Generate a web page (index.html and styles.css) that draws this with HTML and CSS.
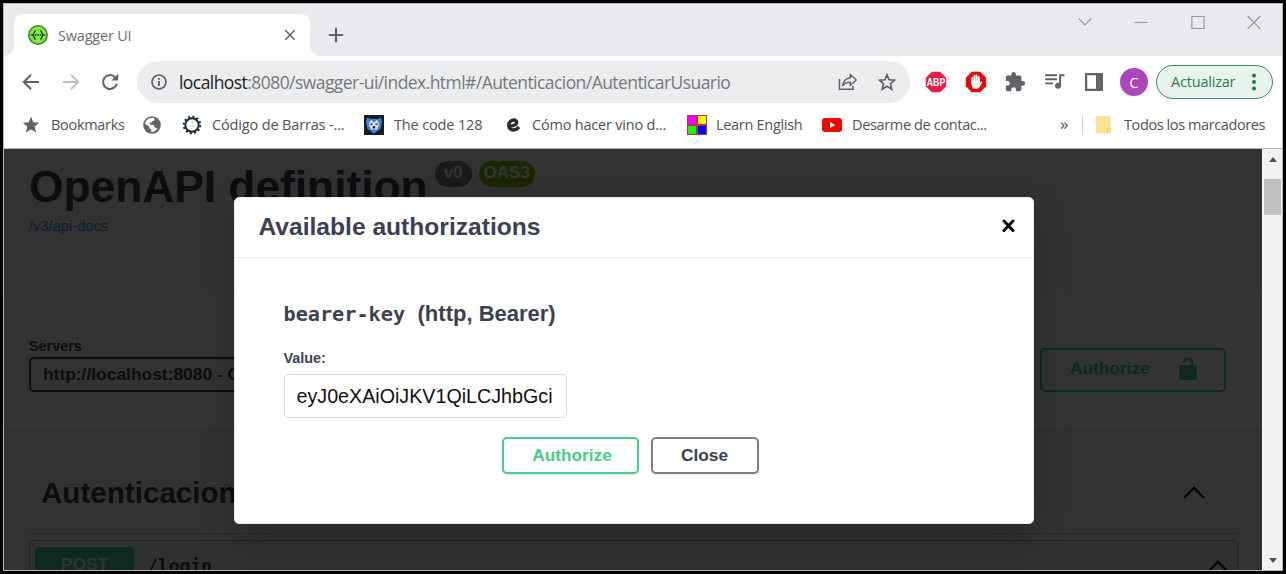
FILE: index.html
```html
<!DOCTYPE html>
<html lang="es">
<head>
<meta charset="utf-8">
<title>Swagger UI</title>
<link rel="stylesheet" href="styles.css">
</head>
<body>
<div class="window">
  <div class="tabstrip">
    <div class="tab">
      <svg class="tab-logo" width="20" height="20" viewBox="0 0 20 20"><circle cx="10" cy="10" r="9.2" fill="#85ea2d" stroke="#35803c" stroke-width="1.5"/><g fill="none" stroke="#173647" stroke-width="1.4"><path d="M7.8 5.8C5.4 5.8 6.800 9.400 4.600 10C6.800 10.600 5.400 14.200 7.800 14.200M12.200 5.800C14.600 5.800 13.200 9.400 15.400 10C13.200 10.600 14.600 14.200 12.200 14.200"/><path d="M7 10H13.200" stroke-dasharray="1.6 .7"/></g></svg>
      <span class="tab-title">Swagger UI</span>
      <svg class="tab-close" width="12" height="12" viewBox="0 0 12 12"><path d="M1.3 1.3L10.7 10.7M10.7 1.3L1.3 10.7" stroke="#5f6368" stroke-width="1.6"/></svg>
    </div>
    <svg class="new-tab" width="16" height="16" viewBox="0 0 16 16"><path d="M8 .8V15.2M.8 8H15.2" stroke="#5f6368" stroke-width="2.2"/></svg>
    <div class="win-controls">
      <svg width="14" height="14" viewBox="0 0 14 14"><path d="M.8 3.5L7 10L13.2 3.5"/></svg>
      <svg width="14" height="14" viewBox="0 0 14 14"><path d="M.5 7.5H13.5"/></svg>
      <svg width="14" height="14" viewBox="0 0 14 14"><path d="M.9 1.5H13.1V13.5H.9Z"/></svg>
      <svg width="14" height="14" viewBox="0 0 14 14"><path d="M.6 1L13.4 13.8M13.4 1L.6 13.8"/></svg>
    </div>
  </div>
  <div class="toolbar">
    <svg class="nav-back" width="18" height="18" viewBox="0 0 18 18"><path d="M17 9H2.5M9 1.8L1.8 9L9 16.2" fill="none" stroke="#5f6368" stroke-width="2"/></svg>
    <svg class="nav-next" width="18" height="18" viewBox="0 0 18 18"><path d="M1 9H15.5M9 1.8L16.2 9L9 16.2" fill="none" stroke="#bdc0c4" stroke-width="2"/></svg>
    <svg class="nav-reload" width="18" height="18" viewBox="0 0 18 18"><path d="M15.8 10.8A7 7 0 1 1 14.2 4.2" fill="none" stroke="#5f6368" stroke-width="2.1"/><path d="M17.2 .8V7.6H10.4Z" fill="#5f6368"/></svg>
    <div class="omnibox">
      <svg width="16" height="16" viewBox="0 0 16 16"><circle cx="8" cy="8" r="7" fill="none" stroke="#5f6368" stroke-width="1.7"/><path d="M8 7V12M8 3.9V5.7" stroke="#5f6368" stroke-width="1.9"/></svg>
      <span class="url"><b>localhost</b>:8080/swagger-ui/index.html#/Autenticacion/AutenticarUsuario</span>
      <svg class="share" width="20" height="18" viewBox="0 0 20 18"><path d="M1.5 6V16.2H15V13" fill="none" stroke="#5f6368" stroke-width="1.5"/><path d="M12.3 1.6L18.3 7L12.3 12.3V9.2C8.6 9.2 6.2 10.2 4.6 13C5 8.5 7.6 5.4 12.3 4.8Z" fill="none" stroke="#5f6368" stroke-width="1.4"/></svg>
      <svg width="18" height="18" viewBox="0 0 18 18"><path d="M9 1.8L11.1 6.8L16.5 7.2L12.4 10.8L13.7 16.1L9 13.2L4.3 16.1L5.6 10.8L1.5 7.2L6.9 6.8Z" fill="none" stroke="#5f6368" stroke-width="1.7"/></svg>
    </div>
    <div class="extensions">
      <svg width="22" height="22" viewBox="0 0 22 22"><path d="M6.8 .8H15.2L21.2 6.8V15.2L15.2 21.2H6.8L.8 15.2V6.8Z" fill="#ed1e45"/><text x="11" y="15" class="abp" textLength="18.500" lengthAdjust="spacingAndGlyphs">ABP</text></svg>
      <svg width="22" height="22" viewBox="0 0 22 22"><path d="M6.8 .8H15.2L21.2 6.8V15.2L15.2 21.2H6.8L.8 15.2V6.8Z" fill="#e40d0d"/><path d="M7.300 13V6.800M9.500 11V4.800M11.700 11V4.600M13.900 12V6.200" stroke="#fff" stroke-width="1.900" stroke-linecap="round"/><path d="M6.400 9H14.800V12L16 10.800C16.900 10.200 17.600 10.800 17 11.700L14.600 16C13 18.600 8.200 18.600 6.900 15.600Z" fill="#fff"/></svg>
      <svg width="22" height="22" viewBox="0 0 24 24"><path d="M20.5 11H19V7c0-1.1-.9-2-2-2h-4V3.500a2.500 2.500 0 0 0-5 0V5H4c-1.100 0-2 .9-2 2v3.800h1.500a2.700 2.700 0 0 1 0 5.400H2V20c0 1.100.9 2 2 2h3.800v-1.500a2.700 2.700 0 0 1 5.400 0V22H17c1.100 0 2-.9 2-2v-4h1.500a2.500 2.500 0 0 0 0-5z" fill="#5f6368"/></svg>
      <svg width="22" height="22" viewBox="0 0 22 22"><path d="M1.200 4.200H13M1.200 8.300H13M1.200 12.400H9" stroke="#5f6368" stroke-width="1.900"/><circle cx="14" cy="14.800" r="3" fill="#5f6368"/><path d="M16.100 15V4.200H20.500" fill="none" stroke="#5f6368" stroke-width="2"/></svg>
      <svg width="22" height="22" viewBox="0 0 22 22"><path d="M2 2H20V20H2ZM4.200 4.200V17.800H13V4.200Z" fill="#5f6368" fill-rule="evenodd"/><path d="M16 4.500V17.500" stroke="#75787c" stroke-width="1"/></svg>
    </div>
    <div class="avatar">C</div>
    <div class="update"><span>Actualizar</span><i></i></div>
  </div>
  <div class="bookmarks">
    <div class="bm bm-star"><svg width="18" height="18" viewBox="0 0 18 18"><path d="M9 .8L11.300 6.200L17.200 6.700L12.700 10.600L14.100 16.600L9 13.400L3.900 16.600L5.300 10.600L.8 6.700L6.700 6.200Z" fill="#5f6368"/></svg><span>Bookmarks</span></div>
    <div class="bm bm-globe"><svg width="18" height="18" viewBox="0 0 18 18"><circle cx="9" cy="9" r="8.800" fill="#5f6368"/><path d="M11 1.900C12.500 3.800 11 4.800 9.300 5L8.700 6.600L6.500 6.800L7 8.800H10.600L11.700 11.500L14.500 12.300C13 14.900 10.500 16.300 8.300 16L8.200 13.600L6.300 12.200V10.200L1.900 8C2.300 4.600 5.800 1.400 11 1.900Z" fill="#fff"/></svg></div>
    <div class="bm bm-gear"><svg width="20" height="20" viewBox="0 0 20 20"><circle cx="10" cy="10" r="8.300" fill="none" stroke="#25394f" stroke-width="2" stroke-dasharray="2.200 2.146"/><circle cx="10" cy="10" r="6.700" fill="#fff" stroke="#16293f" stroke-width="1.900"/><path d="M9 6H11.500L10 9.200H11.600L9 14" fill="none" stroke="#ead9ac" stroke-width="1"/></svg><span>Código de Barras -...</span></div>
    <div class="bm bm-bear"><svg width="20" height="20" viewBox="0 0 20 20"><path d="M0 0H20V20H0Z" fill="#151d28"/><path d="M3 2.500L6 4H14L17 2.500L18 7L16.500 14L10 18.500L3.500 14L2 7Z" fill="#3e83d5"/><path d="M5.500 7L7.500 5L10 8L12.500 5L14.500 7L15 10L13 14.500H7L5 10Z" fill="#d9e1e9"/><path d="M6.500 8.500H8.500V10H6.500ZM11.500 8.500H13.500V10H11.500ZM8.800 11H11.200V13.500H8.800Z" fill="#25272d"/></svg><span>The code 128</span></div>
    <div class="bm bm-e"><svg width="16" height="16" viewBox="0 0 16 16"><path d="M3.500 9C7.500 9.400 11.800 7.800 11.600 5.200C11.300 2.500 7.800 2.200 5.400 4.400C2.800 7 3.200 12 7 12.800C9.800 13.300 12.300 12 14 10" fill="none" stroke="#292b2e" stroke-width="3.400"/></svg><span>Cómo hacer vino d...</span></div>
    <div class="bm bm-learn"><svg width="20" height="20" viewBox="0 0 20 20"><path d="M0 0H20V20H0Z" fill="#b63445"/><path d="M1 1H9V9H1Z" fill="#f0f"/><path d="M11 1H19V9H11Z" fill="#ff0"/><path d="M1 11H9V19H1Z" fill="#1cf000"/><path d="M11 11H19V19H11Z" fill="#00f"/></svg><span>Learn English</span></div>
    <div class="bm bm-yt"><svg width="20" height="20" viewBox="0 0 20 20"><rect y="3" width="20" height="14" rx="3" fill="#f00"/><path d="M8 7V13L13.200 10Z" fill="#fff"/></svg><span>Desarme de contac...</span></div>
    <div class="bm-more">»</div>
    <div class="bm bm-all"><svg width="16" height="18" viewBox="0 0 16 18"><path d="M1.500 0H13Q14.500 0 14.500 1.500V11L15.500 13.500L14.500 17.500H1.500Q0 17.500 0 16.500V1.500Q0 0 1.500 0Z" fill="#fde293"/><path d="M11.500 17V13.500Q11.500 12 13 12H14.800" fill="none" stroke="#f3cf62"/></svg><span>Todos los marcadores</span></div>
  </div>
  <div class="viewport">
    <main class="page">
      <section class="info">
        <div class="title-row"><h1>OpenAPI definition</h1><span class="pill">v0</span><span class="pill oas">OAS3</span></div>
        <a class="docs">/v3/api-docs</a>
      </section>
      <section class="scheme">
        <div class="servers"><label>Servers</label><div class="select">http://localhost:8080 - Generated server url</div></div>
        <div class="auth-btn"><span>Authorize</span><svg width="18" height="24" viewBox="0 0 18 24"><path d="M5 5.500C5.300 0 13 .2 13 5.500V9" fill="none" stroke="#49cc90" stroke-width="2.600"/><rect y="8" width="18" height="15" rx="2.500" fill="#49cc90"/></svg></div>
      </section>
      <section class="ops">
        <div class="tag"><h2>Autenticacion</h2><svg width="22" height="13" viewBox="0 0 22 13"><path d="M1 12L11 1.800L21 12" fill="none" stroke="#000" stroke-width="2"/></svg></div>
        <div class="opblock"><span class="method">POST</span><code>/login</code><svg width="22" height="13" viewBox="0 0 22 13"><path d="M1 12L11 1.800L21 12" fill="none" stroke="#000" stroke-width="2"/></svg></div>
      </section>
    </main>
    <div class="scrollbar"><i class="up"></i><i class="thumb"></i><i class="down"></i></div>
    <div class="backdrop">
      <div class="modal">
        <header><h3>Available authorizations</h3><svg width="13" height="14" viewBox="0 0 13 14"><path d="M2 2L11 11.500M11 2L2 11.500" stroke="#000" stroke-width="3" stroke-linecap="round"/></svg></header>
        <div class="modal-body">
          <h4><code>bearer-key</code><span>(http, Bearer)</span></h4>
          <label>Value:</label>
          <div class="token">eyJ0eXAiOiJKV1QiLCJhbGci</div>
          <div class="actions"><button class="btn go">Authorize</button><button class="btn">Close</button></div>
        </div>
      </div>
    </div>
  </div>
</div>
</body>
</html>
```
FILE: styles.css
```css
* { box-sizing: border-box; }
body { margin: 0; width: 1286px; height: 574px; overflow: hidden; background: #000; font-family: "Liberation Sans", Arial, sans-serif; }
svg { display: block; flex: none; }
h1, h2, h3, h4 { margin: 0; }
.window { margin: 3px; width: 1280px; height: 568px; border: 1px solid #b4b4b4; background: #fff; display: flex; flex-direction: column; }

.tabstrip { height: 52px; background: #e8eaed; display: flex; flex: none; font-family: "Open Sans", sans-serif; }
.tab { position: relative; margin: 10px 0 0 10px; width: 296px; height: 42px; background: #fff; border-radius: 9px 9px 0 0; display: flex; align-items: center; padding-left: 14px; }
.tab::before, .tab::after { content: ""; position: absolute; bottom: 0; width: 10px; height: 10px; }
.tab::before { left: -10px; background: radial-gradient(circle at 0 0, transparent 9.5px, #fff 10px); }
.tab::after { right: -10px; background: radial-gradient(circle at 100% 0, transparent 9.5px, #fff 10px); }
.tab-title { margin-left: 10px; width: 226px; font-size: 14.5px; letter-spacing: -.2px; color: #6b6f74; }
.new-tab { margin: 23px 0 0 18px; }
.win-controls { display: flex; gap: 42.3px; margin: 11px 21px 0 auto; }
.win-controls path { fill: none; stroke: #96989c; stroke-width: 1.2; }

.toolbar { height: 52px; display: flex; align-items: center; flex: none; padding-left: 18px; font-family: "Open Sans", sans-serif; }
.nav-next { margin-left: 22px; }
.nav-reload { margin-left: 21px; }
.omnibox { margin-left: 18px; width: 773px; height: 42px; border-radius: 21px; background: #ebecee; display: flex; align-items: center; padding: 0 14px; color: #75787d; }
.url { margin-left: 12px; width: 659px; font-size: 17.5px; letter-spacing: -.56px; white-space: nowrap; }
.url b { font-weight: 400; color: #202124; }
.omnibox .share { margin-right: 20px; }
.extensions { display: flex; gap: 17.5px; margin-left: 15px; }
.abp { font: bold 10.5px "Liberation Sans", sans-serif; fill: #fff; text-anchor: middle; }
.avatar { margin-left: 15px; width: 28px; height: 28px; border-radius: 50%; background: #ab47bc; color: #fff; font-size: 15px; line-height: 28px; text-align: center; }
.update { margin-left: 8px; width: 117px; height: 34px; border: 1.5px solid #3b8a58; border-radius: 17px; background: #e9f3ed; color: #2c7d48; display: flex; align-items: center; padding: 0 0 1px 14px; font-size: 14.5px; letter-spacing: -.2px; }
.update span { width: 81px; }
.update i { width: 4px; height: 4px; border-radius: 50%; background: #188038; box-shadow: 0 -6.5px #188038, 0 6.5px #188038; }

.bookmarks { height: 41px; display: flex; flex: none; align-items: center; padding: 0 0 7px 18px; border-bottom: 1px solid #b4b4b4; font-family: "Open Sans", sans-serif; font-size: 14.5px; letter-spacing: -.3px; color: #505357; }
.bm { display: flex; align-items: center; white-space: nowrap; flex: none; }
.bm-star { width: 121px; gap: 11px; }
.bm-globe { width: 39px; }
.bm-gear { width: 182px; gap: 10px; letter-spacing: -.15px; }
.bm-bear { width: 141px; gap: 10px; letter-spacing: -.15px; }
.bm-e { width: 182px; gap: 11px; letter-spacing: -.2px; }
.bm-learn { width: 135px; gap: 9px; }
.bm-yt { width: 238px; gap: 10px; letter-spacing: -.35px; }
.bm-more { width: 22px; font-size: 17px; padding-bottom: 3px; }
.bm-all { height: 20px; border-left: 1px solid #cfd1d4; padding-left: 13px; gap: 12px; letter-spacing: -.4px; }

.viewport { position: relative; flex: 1; min-height: 0; overflow: hidden; display: flex; }
.page { width: 1258px; height: 421px; overflow: hidden; background: #fafafa; color: #3b4151; display: flex; flex-direction: column; }
.info { height: 145px; flex: none; padding: 12px 0 0 25px; }
.title-row { display: flex; height: 54px; gap: 7px; }
h1 { font-size: 44.3px; line-height: 52px; white-space: nowrap; }
.pill { height: 26px; border-radius: 13px; background: #7d8492; color: #fff; font-weight: bold; font-size: 17px; line-height: 24px; padding: 0 9px; }
.pill.oas { background: #89bf04; padding: 0 5px; }
.docs { display: block; margin-top: 2px; color: #4990e2; font-size: 14.7px; line-height: 18px; }
.scheme { height: 137px; flex: none; background: #fff; border-bottom: 1px solid #dcdcdc; display: flex; justify-content: space-between; padding: 43px 36px 0 25px; }
.servers { width: 430px; }
.servers label { display: block; font-weight: bold; font-size: 14.4px; line-height: 18px; height: 20px; }
.select { height: 35px; border: 2px solid #41444e; border-radius: 5px; font-size: 17.4px; font-weight: bold; line-height: 31px; padding-left: 12px; }
.auth-btn { margin-top: 11px; width: 186px; height: 44px; border: 2px solid #49cc90; border-radius: 5px; color: #49cc90; font-weight: bold; font-size: 17.3px; display: flex; align-items: center; padding: 0 27px 3px 28px; justify-content: space-between; }
.ops { padding: 0 24px 0 25px; }
.tag { height: 103px; border-bottom: 1px solid #c3c5ca; display: flex; align-items: center; justify-content: space-between; padding: 21px 33px 0 12px; }
h2 { font-size: 29.6px; }
.opblock { margin-top: 6px; height: 50px; border: 1px solid #49cc90; border-radius: 5px; background: #e8f6f0; display: flex; align-items: flex-start; padding: 6px 8px 6px 5px; }
.method { width: 99px; height: 38px; border-radius: 4px; background: #49cc90; color: #fff; font-weight: bold; font-size: 17.4px; line-height: 35px; text-align: center; }
.opblock code { margin-left: 13px; font: bold 18px/37px "DejaVu Sans Mono", monospace; }
.opblock svg { margin: 13px 0 0 auto; }

.scrollbar { width: 20px; background: #f1f1f1; display: flex; flex-direction: column; align-items: center; border-left: 1px solid #fafafa; }
.scrollbar .up, .scrollbar .down { border: 4.5px solid transparent; }
.scrollbar .up { margin-top: 4px; border-bottom: 5px solid #505050; }
.thumb { width: 17px; height: 36px; margin-top: 17px; background: #c1c1c1; }
.scrollbar .down { margin: auto 0 3px; border-top: 5px solid #505050; }

.backdrop { position: absolute; inset: 0 auto 0 0; width: 1258px; background: rgba(0,0,0,.8); padding: 48px 0 0 229.5px; }
.modal { width: 800px; height: 327px; background: #fff; border: 1px solid #ebebeb; border-radius: 5px; box-shadow: 0 12px 37px rgba(0,0,0,.2); color: #3b4151; }
.modal header { height: 60px; border-bottom: 1px solid #ebebeb; display: flex; align-items: center; justify-content: space-between; padding: 0 18px 3px 24px; }
h3 { font-size: 24.6px; padding-top: 1px; }
.modal-body { padding: 41px 49px 0; }
h4 { display: flex; align-items: center; height: 29px; font-size: 22px; gap: 12.5px; }
h4 code { font: bold 20.2px "DejaVu Sans Mono", monospace; }
.modal-body label { display: block; margin-top: 20px; font-size: 14.4px; line-height: 20px; font-weight: bold; }
.token { margin-top: 6px; width: 283px; height: 44px; border: 1px solid #d9d9d9; border-radius: 5px; color: #111; font-size: 19.7px; line-height: 42px; padding-left: 12px; }
.actions { display: flex; gap: 12px; margin: 19px 0 0 218px; }
.btn { height: 37px; width: 108px; background: #fff; border: 2px solid #808080; border-radius: 5px; box-shadow: 0 1px 2px rgba(0,0,0,.1); color: #3b4151; font: bold 17.3px "Liberation Sans", Arial, sans-serif; padding: 0 0 1px; }
.btn.go { width: 137px; border-color: #49cc90; color: #49cc90; padding-left: 4px; }
```
